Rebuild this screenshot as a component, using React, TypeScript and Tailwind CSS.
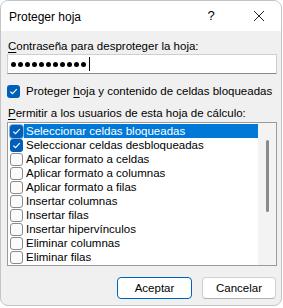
import React from "react";

const items = [
  { label: "Seleccionar celdas bloqueadas", checked: true, selected: true },
  { label: "Seleccionar celdas desbloqueadas", checked: true },
  { label: "Aplicar formato a celdas" },
  { label: "Aplicar formato a columnas" },
  { label: "Aplicar formato a filas" },
  { label: "Insertar columnas" },
  { label: "Insertar filas" },
  { label: "Insertar hipervínculos" },
  { label: "Eliminar columnas" },
  { label: "Eliminar filas" },
];

function Check({ checked, onBlue }: { checked?: boolean; onBlue?: boolean }) {
  if (checked) {
    return (
      <div
        className={
          "w-[13px] h-[13px] rounded-[3px] bg-[#005fb8] flex items-center justify-center shrink-0 " +
          (onBlue ? "ring-1 ring-[#7fb0e0]" : "")
        }
      >
        <svg width="9" height="9" viewBox="0 0 9 9">
          <path d="M1.3 4.6 L3.5 6.7 L7.8 2.1" fill="none" stroke="#fff" strokeWidth="1.2" />
        </svg>
      </div>
    );
  }
  return <div className="w-[13px] h-[13px] rounded-[3px] border border-[#8a8a8a] bg-[#fbfbfb] shrink-0" />;
}

export default function App() {
  return (
    <div className="w-[283px] h-[308px] bg-white font-['Liberation_Sans',Arial,sans-serif] text-[11.5px] leading-[16px] text-black">
      <div className="w-[282px] h-[306px] rounded-[8px] border border-[#c4c4c4] bg-[#f0f0f0] overflow-hidden flex flex-col">
        <div className="h-[30px] bg-white flex items-center pl-[8px] shrink-0">
          <span className="flex-1 pt-[1px] text-[12px]">Proteger hoja</span>
          <span className="w-[12px] text-center mr-[36px] text-[13px]">?</span>
          <svg width="12" height="12" viewBox="0 0 12 12" className="mr-[16px]">
            <path d="M1 1 L11 11 M11 1 L1 11" stroke="#222" strokeWidth="1" />
          </svg>
        </div>
        <div className="pl-[6px] pt-[7px] flex flex-col">
          <div className="pl-[1px] whitespace-nowrap">
            <span className="underline underline-offset-2">C</span>ontraseña para desproteger la hoja:
          </div>
          <div className="w-[270px] h-[20px] bg-white border border-[#cfcfcf] border-b-[#8a8a8a] flex items-center pl-[3px] gap-[2px]">
            {Array.from({ length: 11 }).map((_, i) => (
              <span key={i} className="w-[5px] h-[5px] rounded-full bg-black" />
            ))}
            <span className="w-[1px] h-[14px] bg-black ml-[1px]" />
          </div>
          <div className="h-[16px] mt-[9px] flex items-center gap-[6px] whitespace-nowrap">
            <Check checked />
            <span>
              Proteger <span className="underline underline-offset-2">h</span>oja y contenido de celdas bloqueadas
            </span>
          </div>
          <div className="mt-[6px] pl-[1px] whitespace-nowrap">
            <span className="underline underline-offset-2">P</span>ermitir a los usuarios de esta hoja de cálculo:
          </div>
          <div className="w-[270px] h-[144px] mt-[1px] bg-white border border-[#9a9a9a] flex">
            <div className="flex-1 pt-[1px] flex flex-col">
              {items.map((it) => (
                <div key={it.label} className="h-[14px] flex items-center pl-[2px]">
                  <Check checked={it.checked} onBlue={it.selected} />
                  <div
                    className={
                      "flex-1 h-[14px] ml-[1px] pl-[2px] leading-[14px] whitespace-nowrap " +
                      (it.selected ? "bg-[#0078d7] text-white" : "")
                    }
                  >
                    {it.label}
                  </div>
                </div>
              ))}
            </div>
            <div className="w-[18px] bg-[#f3f3f3] flex justify-center pt-[17px]">
              <div className="w-[3px] h-[72px] rounded-full bg-[#8a8a8a]" />
            </div>
          </div>
          <div className="mt-[11px] flex justify-end gap-[10px] pr-[5px]">
            <div className="w-[75px] h-[22px] rounded-[4px] bg-white border border-[#005fb8] flex items-center justify-center">
              Aceptar
            </div>
            <div className="w-[74px] h-[22px] rounded-[4px] bg-white border border-[#d0d0d0] border-b-[#b0b0b0] flex items-center justify-center">
              Cancelar
            </div>
          </div>
        </div>
      </div>
    </div>
  );
}
